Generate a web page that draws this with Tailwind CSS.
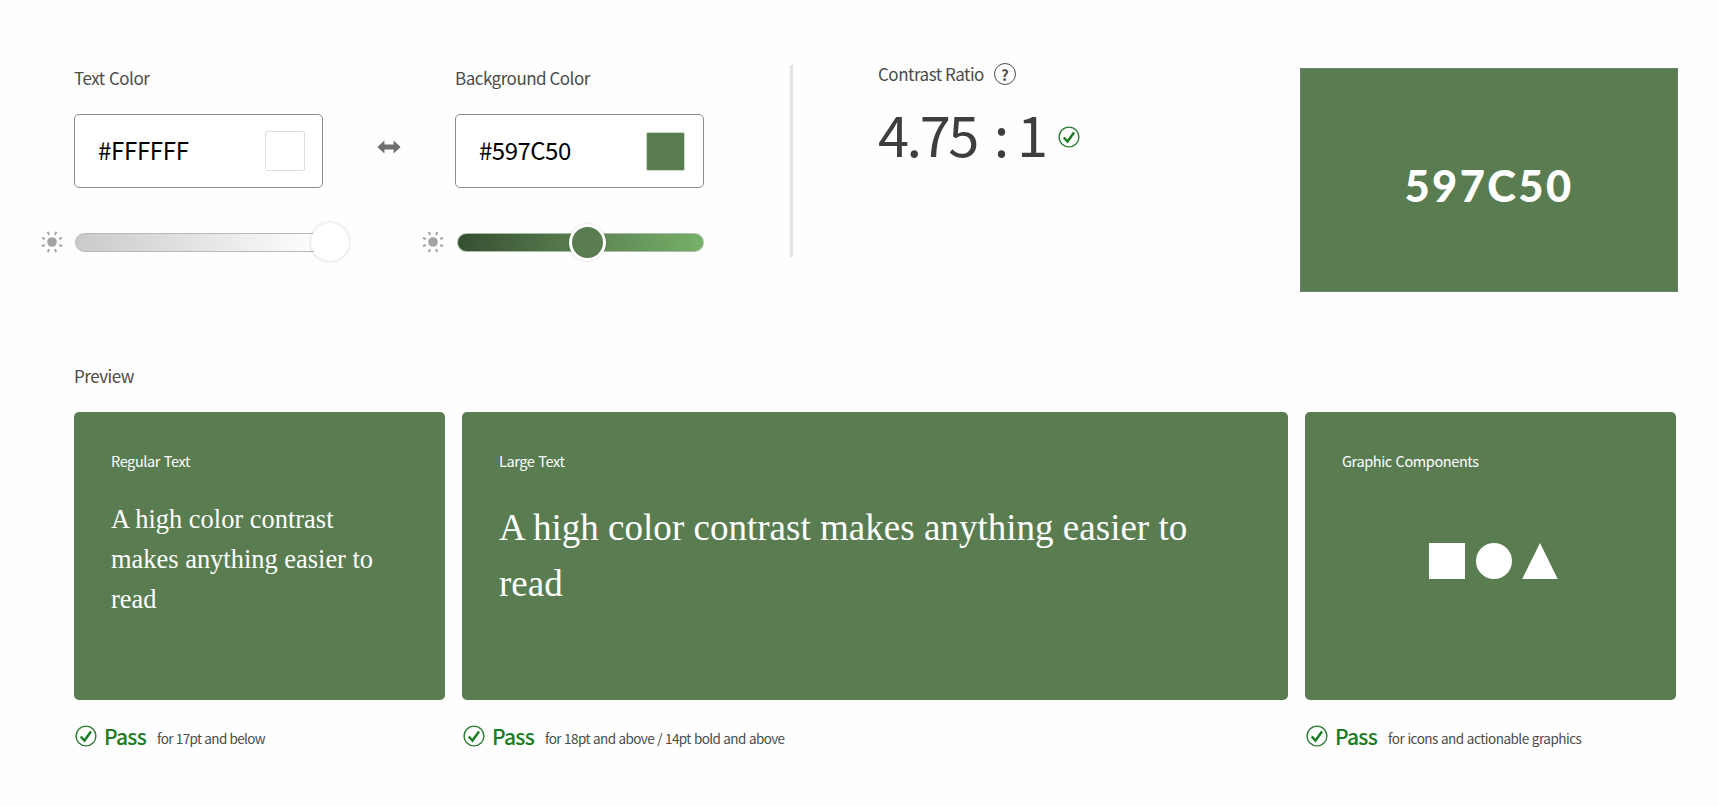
<!DOCTYPE html>
<html lang="en">
<head>
    <meta charset="UTF-8">
    <meta name="viewport" content="width=device-width, initial-scale=1.0">
    <title>Contrast Checker</title>

    <!-- Tailwind CSS -->
    <script src="https://cdn.jsdelivr.net/npm/@tailwindcss/browser@4"></script>
</head>
<body class="bg-[#fefefe] w-[1718px] h-[806px] overflow-hidden font-['Noto_Sans_CJK_JP','Noto_Sans',sans-serif] text-[#4b4b4b]">

    <!-- Shared icons -->
    <svg class="hidden">
        <symbol id="sun" viewBox="0 0 22 22">
            <circle cx="11" cy="11" r="4.8" fill="#a3a3a3"/>
            <g stroke="#a3a3a3" stroke-width="2">
                <path d="M14 3.8l1.2-2.9M18.2 8l2.9-1.2M18.2 14l2.9 1.2M14 18.2l1.2 2.9M8 18.2l-1.2 2.9M3.8 14l-2.9 1.2M3.8 8L.9 6.8M8 3.8L6.8.9"/>
            </g>
        </symbol>
        <symbol id="check" viewBox="0 0 22 22">
            <circle cx="11" cy="11" r="9.9" fill="none" stroke="#2d7d38" stroke-width="1.4"/>
            <path d="M5.7 11.5l3.8 4L16 6.6" fill="none" stroke="#1a7d22" stroke-width="2.5"/>
        </symbol>
    </svg>

    <!-- Color pickers, ratio and swatch -->
    <div class="flex items-start pl-[41px] pt-[65px]">
        <div class="w-[282px]">
            <h2 class="pl-[33px] pt-px text-[17px] leading-6 tracking-[-0.5px] [word-spacing:1px]">Text Color</h2>
            <div class="ml-[33px] mt-6 flex h-[74px] items-center justify-between rounded-[5px] border border-[#8c8c8c] bg-white pl-[23px] pr-[17px]">
                <span class="pb-0.5 text-[24px] leading-8 tracking-[-0.3px] text-black">#FFFFFF</span>
                <span class="size-10 rounded-xs border border-[#dedede] bg-white"></span>
            </div>
            <div class="mt-[43px] flex h-[22px] items-center">
                <svg class="size-[22px]"><use href="#sun"/></svg>
                <div class="relative ml-[12px] h-[19px] flex-1 rounded-full border border-[#b9b9b9] bg-linear-to-r from-[#cacaca] to-white">
                    <span class="absolute left-[235px] -top-[11px] size-[38px] rounded-full bg-white shadow-[0_0_3px_1px_rgba(0,0,0,0.11)]"></span>
                </div>
            </div>
        </div>

        <svg class="ml-[54px] mt-[75px] h-[14px] w-6" viewBox="0 0 24 14">
            <path d="M.4 7L7.4.6V4.4H16.6V.6L23.6 7l-7 6.4V9.6H7.4v3.8z" fill="#6e6e6e"/>
        </svg>

        <div class="ml-[21px] w-[282px]">
            <h2 class="pl-[33px] pt-px text-[17px] leading-6 tracking-[-0.5px]">Background Color</h2>
            <div class="ml-[33px] mt-6 flex h-[74px] items-center justify-between rounded-[5px] border border-[#8c8c8c] bg-white pl-[23px] pr-[18px]">
                <span class="pb-0.5 text-[24px] leading-8 tracking-[-0.5px] text-black">#597C50</span>
                <span class="size-[39px] rounded-xs border border-[#c9dcc4] bg-[#597c50]"></span>
            </div>
            <div class="mt-[43px] flex h-[22px] items-center">
                <svg class="size-[22px]"><use href="#sun"/></svg>
                <div class="relative ml-[13px] h-[19px] flex-1 rounded-full border border-[#a9bca5] bg-linear-to-r from-[#354f30] via-[#5a8051] to-[#76b169]">
                    <span class="absolute left-[111px] -top-[10px] size-[37px] rounded-full border-[3px] border-white bg-[#597c50] shadow-[0_0_3px_rgba(0,0,0,0.14)]"></span>
                </div>
            </div>
        </div>

        <div class="ml-[86px] h-[192px] w-[3px] bg-[#e4e4e4]"></div>

        <div class="-mt-[3px] ml-[85px] w-[422px]">
            <div class="flex items-center">
                <h2 class="text-[17px] leading-6 tracking-[-0.5px]">Contrast Ratio</h2>
                <span class="ml-[10px] flex size-[22px] items-center justify-center rounded-full border-[1.5px] border-[#4b4b4b] text-[15px] font-bold leading-none">?</span>
            </div>
            <div class="mt-[11px] flex items-center">
                <div class="flex text-[56px] leading-[72px] tracking-[-2.5px] text-[#3e3e3e]">
                    <span>4.75</span>
                    <span class="ml-[17px]">:</span>
                    <span class="ml-[10px]">1</span>
                </div>
                <svg class="ml-[13px] mt-[8px] size-[22px]"><use href="#check"/></svg>
            </div>
        </div>

        <div class="mt-[3px] flex h-[224px] w-[378px] items-center justify-center border border-[#6d7f6a] bg-[#597c50] pt-3">
            <span class="font-[Lato] text-[43.5px] font-black leading-none tracking-[2.4px] text-white">597C50</span>
        </div>
    </div>

    <!-- Preview -->
    <div class="pl-[74px] pt-[71px]">
        <h2 class="pt-px text-[17px] leading-6 tracking-[-0.5px]">Preview</h2>

        <div class="mt-6 flex">
            <div class="w-[371px]">
                <div class="h-[288px] rounded-[5px] bg-[#597c50] px-[37px] pt-[37px] text-white">
                    <h3 class="text-[14.5px] leading-6 tracking-[-0.4px] [word-spacing:1px]">Regular Text</h3>
                    <p class="mt-[26px] w-[290px] font-['Liberation_Serif',serif] text-[26.45px] leading-[40px]">A high color contrast makes anything easier to read</p>
                </div>
                <div class="mt-[21px] flex items-center">
                    <svg class="ml-px size-[22px]"><use href="#check"/></svg>
                    <span class="ml-[7px] text-[21px] font-medium leading-7 tracking-[-0.7px] text-[#1a7d22]">Pass</span>
                    <span class="ml-[11px] mt-[5px] text-[13.5px] leading-6 tracking-[-0.65px] [word-spacing:0.6px]">for 17pt and below</span>
                </div>
            </div>

            <div class="ml-[17px] w-[826px]">
                <div class="h-[288px] rounded-[5px] bg-[#597c50] px-[37px] pt-[37px] text-white">
                    <h3 class="text-[14.5px] leading-6 tracking-[-0.4px] [word-spacing:1px]">Large Text</h3>
                    <p class="mt-[27px] w-[730px] font-['Liberation_Serif',serif] text-[37.05px] leading-[56px]">A high color contrast makes anything easier to read</p>
                </div>
                <div class="mt-[21px] flex items-center">
                    <svg class="ml-px size-[22px]"><use href="#check"/></svg>
                    <span class="ml-[7px] text-[21px] font-medium leading-7 tracking-[-0.7px] text-[#1a7d22]">Pass</span>
                    <span class="ml-[11px] mt-[5px] text-[13.5px] leading-6 tracking-[-0.6px] [word-spacing:0.7px]">for 18pt and above / 14pt bold and above</span>
                </div>
            </div>

            <div class="ml-[17px] w-[371px]">
                <div class="h-[288px] rounded-[5px] bg-[#597c50] px-[37px] pt-[37px] text-white">
                    <h3 class="text-[14.5px] leading-6 tracking-[-0.4px] [word-spacing:1px]">Graphic Components</h3>
                    <svg class="ml-[87px] mt-[69.5px] h-9 w-[130px]" viewBox="0 0 130 36" fill="#fff">
                        <rect width="36" height="36"/>
                        <circle cx="65" cy="18" r="18"/>
                        <path d="M111 0l17.7 36H93.2z"/>
                    </svg>
                </div>
                <div class="mt-[21px] flex items-center">
                    <svg class="ml-px size-[22px]"><use href="#check"/></svg>
                    <span class="ml-[7px] text-[21px] font-medium leading-7 tracking-[-0.7px] text-[#1a7d22]">Pass</span>
                    <span class="ml-[11px] mt-[5px] text-[13.5px] leading-6 tracking-[-0.5px] [word-spacing:0.6px]">for icons and actionable graphics</span>
                </div>
            </div>
        </div>
    </div>

</body>
</html>
